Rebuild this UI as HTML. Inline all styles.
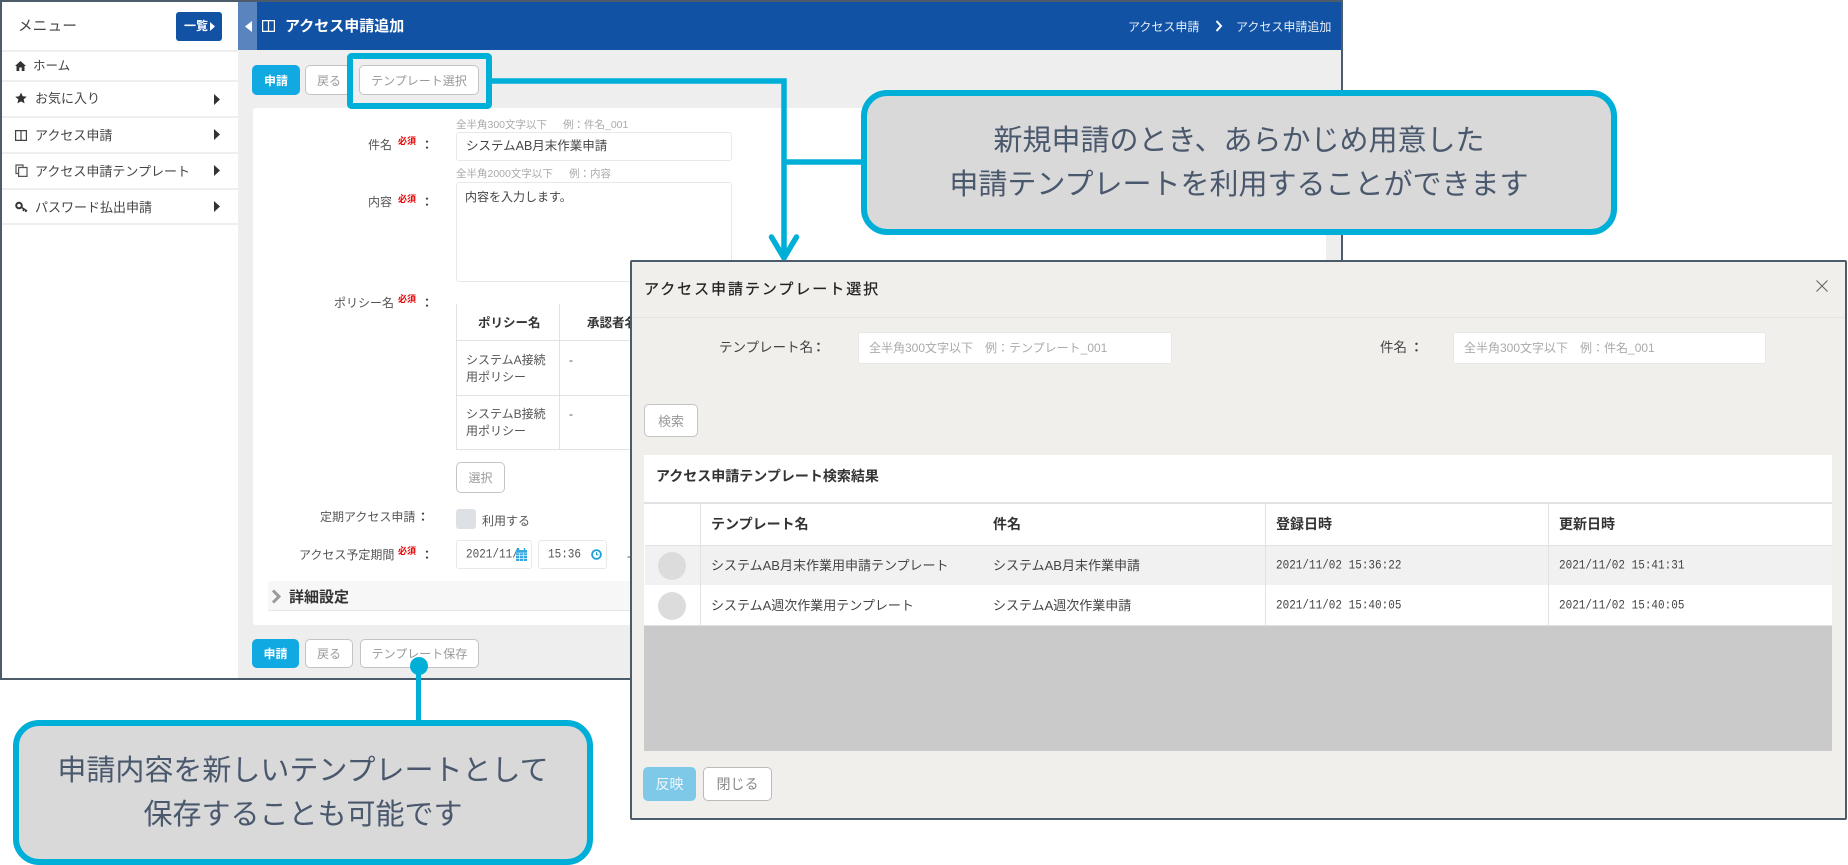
<!DOCTYPE html>
<html lang="ja"><head><meta charset="utf-8"><title>アクセス申請追加</title>
<style>
*{box-sizing:border-box}
html,body{margin:0;padding:0;background:#fff;width:1848px;height:865px;overflow:hidden}
body{position:relative;font-family:"Liberation Sans","Noto Sans CJK JP",sans-serif;color:#444}
.a,.t{position:absolute}
.t{white-space:nowrap;line-height:20px;font-size:13px;margin-top:1px}
.btn{position:absolute;display:flex;align-items:center;justify-content:center;border-radius:5px;border:1.5px solid #c4c4c4;background:#fff;color:#999;font-size:12px;white-space:nowrap}
.pri{background:#10a9e2;border-color:#10a9e2;color:#fff;font-weight:bold}
.inp{position:absolute;background:#fff;border:1px solid #e8e8e8;border-radius:3px}
.sep{position:absolute;left:2px;width:236px;height:2px;background:#eeeeee}
.req{position:absolute;color:#e60000;font-size:9px;font-weight:bold;line-height:12px;white-space:nowrap}
.help{color:#aaa;font-size:10.5px;margin-top:0}
.lab{color:#555;font-size:12px}
.call{position:absolute;background:#d9d9d9;border:6px solid #00afd7;border-radius:26px}
.ct{position:absolute;font-size:29px;line-height:44px;color:#4a586d;white-space:nowrap;left:0;right:0;text-align:center}
.m{font-family:"Liberation Mono","Noto Sans CJK JP",monospace;font-size:11px;color:#444;transform:scaleY(1.2);transform-origin:0 50%}
.b{font-weight:bold;color:#333;font-size:14px}
</style></head><body>

<!-- background window -->
<div class="a" style="left:0;top:0;width:1343px;height:680px;background:#eee;border:2px solid #4d5c6b;overflow:hidden"></div>
<div class="a" style="left:2px;top:2px;width:236px;height:676px;background:#fff"></div>
<div class="a" style="left:238px;top:2px;width:19px;height:48px;background:#5a84be"></div>
<div class="a" style="left:257px;top:2px;width:1084px;height:48px;background:#1152a5"></div>

<!-- sidebar -->
<div class="t" style="left:18px;top:16px;font-size:14.5px;color:#444;letter-spacing:.3px">メニュー</div>
<div class="a" style="left:176px;top:12px;width:46px;height:29px;background:#1152a5;border-radius:3px"></div>
<div class="t" style="left:184px;top:15px;color:#fff;font-size:12px;font-weight:bold">一覧</div>
<svg class="a" style="left:210px;top:22px" width="5" height="9"><path d="M0 0L5 4.500L0 9Z" fill="#fff"/></svg>
<div class="sep" style="top:50px"></div><div class="sep" style="top:80px"></div><div class="sep" style="top:116px"></div><div class="sep" style="top:152px"></div><div class="sep" style="top:188px"></div><div class="sep" style="top:223px"></div>
<svg class="a" style="left:15px;top:61px" width="11" height="10" viewBox="0 0 11 10"><path d="M5.500 0L11 5H9.500V10H6.700V6.500H4.300V10H1.500V5H0Z" fill="#333"/></svg>
<div class="t" style="left:33px;top:55px;font-size:12.5px">ホーム</div>
<svg class="a" style="left:15px;top:92px" width="12" height="12" viewBox="0 0 24 24"><path d="M12 1l3.400 7.400 8 .9-6 5.400 1.700 8L12 18.700 4.900 22.800l1.700-8-6-5.400 8-.9z" fill="#333"/></svg>
<div class="t" style="left:35px;top:88px">お気に入り</div>
<svg class="a" style="left:15px;top:130px" width="12" height="11" viewBox="0 0 12 11"><path d="M.6.6H11.400V10.400H.6ZM6 .6V10.400" fill="none" stroke="#444" stroke-width="1.200"/></svg>
<div class="t" style="left:35px;top:125px">アクセス申請</div>
<svg class="a" style="left:15px;top:164px" width="13" height="13" viewBox="0 0 13 13"><path d="M3.500 1H1V9.500H3M3.600 3.500H12V12.400H3.600Z M3 1H8V3" fill="none" stroke="#555" stroke-width="1.200"/></svg>
<div class="t" style="left:35px;top:161px">アクセス申請テンプレート</div>
<svg class="a" style="left:15px;top:201px" width="13" height="12" viewBox="0 0 13 12"><circle cx="4" cy="4.500" r="2.800" fill="none" stroke="#333" stroke-width="2"/><path d="M6 6L12 10M9 8L8 10M11 9.500L10.500 11" stroke="#333" stroke-width="1.600" fill="none"/></svg>
<div class="t" style="left:35px;top:197px">パスワード払出申請</div>
<svg class="a" style="left:214px;top:94px" width="6" height="180"><path d="M0 0L6 5.500L0 11ZM0 35L6 40.500L0 46ZM0 71L6 76.500L0 82ZM0 107L6 112.500L0 118Z" fill="#333"/></svg>

<!-- top bar -->
<svg class="a" style="left:245px;top:21px" width="7" height="11"><path d="M7 0V11L0 5.500Z" fill="#fff"/></svg>
<svg class="a" style="left:262px;top:20px" width="13" height="12" viewBox="0 0 13 12"><path d="M.6.6H12.400V11.400H.6ZM6.500 .6V11.400" fill="none" stroke="#fff" stroke-width="1.200"/></svg>
<div class="t" style="left:285px;top:16px;color:#fff;font-size:15px;font-weight:bold">アクセス申請追加</div>
<div class="t" style="left:1128px;top:16px;color:#e6edf6;font-size:12px">アクセス申請</div>
<svg class="a" style="left:1215px;top:20px" width="8" height="12"><path d="M1.500 1L6 6L1.500 11" fill="none" stroke="#fff" stroke-width="2"/></svg>
<div class="t" style="left:1236px;top:16px;color:#e6edf6;font-size:12px">アクセス申請追加</div>

<!-- top buttons -->
<div class="btn pri" style="left:252px;top:65px;width:48px;height:30px">申請</div>
<div class="btn" style="left:305px;top:65px;width:48px;height:30px">戻る</div>
<div class="btn" style="left:359px;top:65px;width:120px;height:30px">テンプレート選択</div>

<!-- form panel -->
<div class="a" style="left:253px;top:108px;width:1073px;height:517px;background:#fff;border-radius:3px"></div>
<div class="t help" style="left:456px;top:115px">全半角300文字以下</div><div class="t help" style="left:563px;top:115px">例：件名_001</div>
<div class="t lab" style="left:368px;top:134px">件名</div><div class="req" style="left:398px;top:135px">必須</div><div class="t" style="left:421px;top:134px;font-weight:bold;font-size:12px">：</div>
<div class="inp" style="left:456px;top:132px;width:276px;height:29px"></div>
<div class="t" style="left:466px;top:135px;font-size:12.500px;color:#444">システムAB月末作業申請</div>
<div class="t help" style="left:456px;top:164px">全半角2000文字以下</div><div class="t help" style="left:569px;top:164px">例：内容</div>
<div class="t lab" style="left:368px;top:191px">内容</div><div class="req" style="left:398px;top:193px">必須</div><div class="t" style="left:421px;top:191px;font-weight:bold;font-size:12px">：</div>
<div class="inp" style="left:456px;top:182px;width:276px;height:100px"></div>
<div class="t" style="left:465px;top:186px;font-size:12px;color:#444">内容を入力します。</div>
<div class="t lab" style="left:334px;top:292px">ポリシー名</div><div class="req" style="left:398px;top:293px">必須</div><div class="t" style="left:421px;top:292px;font-weight:bold;font-size:12px">：</div>

<!-- policy table -->
<div class="a" style="left:456px;top:304px;width:190px;height:146px;border-left:1px solid #e2e2e2;border-bottom:1px solid #e2e2e2"></div>
<div class="a" style="left:559px;top:304px;width:1px;height:146px;background:#e2e2e2"></div>
<div class="a" style="left:456px;top:340px;width:190px;height:1px;background:#e2e2e2"></div>
<div class="a" style="left:456px;top:395px;width:190px;height:1px;background:#e2e2e2"></div>
<div class="t" style="left:478px;top:312px;font-weight:bold;font-size:12.500px;color:#333">ポリシー名</div>
<div class="t" style="left:587px;top:312px;font-weight:bold;font-size:12.500px;color:#333">承認者名</div>
<div class="t lab" style="left:466px;top:349px">システムA接続</div><div class="t lab" style="left:466px;top:366px">用ポリシー</div>
<div class="t lab" style="left:466px;top:403px">システムB接続</div><div class="t lab" style="left:466px;top:420px">用ポリシー</div>
<div class="t lab" style="left:569px;top:349px">-</div><div class="t lab" style="left:569px;top:403px">-</div>

<div class="btn" style="left:456px;top:462px;width:49px;height:31px">選択</div>
<div class="t lab" style="left:320px;top:506px">定期アクセス申請</div><div class="t" style="left:417px;top:506px;font-weight:bold;font-size:12px">：</div>
<div class="a" style="left:456px;top:509px;width:20px;height:20px;background:#dde1e6;border-radius:3px"></div>
<div class="t lab" style="left:482px;top:510px">利用する</div>
<div class="t lab" style="left:299px;top:544px">アクセス予定期間</div><div class="req" style="left:398px;top:545px">必須</div><div class="t" style="left:421px;top:544px;font-weight:bold;font-size:12px">：</div>
<div class="inp" style="left:456px;top:540px;width:76px;height:29px"></div>
<div class="t m" style="left:466px;top:544px;color:#555">2021/11/</div>
<svg class="a" style="left:516px;top:548px" width="11" height="13" viewBox="0 0 11 13"><path d="M0 2H11V13H0Z" fill="#36a9e1"/><path d="M2.500 0V3M8.500 0V3" stroke="#36a9e1" stroke-width="1.500"/><path d="M0 5H11M0 7.700H11M0 10.300H11M3.600 5V13M7.300 5V13" stroke="#fff" stroke-width=".6"/></svg>
<div class="inp" style="left:538px;top:540px;width:69px;height:29px"></div>
<div class="t m" style="left:548px;top:544px;color:#555">15:36</div>
<svg class="a" style="left:591px;top:549px" width="11" height="11" viewBox="0 0 11 11"><circle cx="5.500" cy="5.500" r="4.400" fill="none" stroke="#1e9fd8" stroke-width="1.800"/><path d="M5.500 3V5.700H7.500" fill="none" stroke="#1e9fd8"/></svg>
<div class="t lab" style="left:627px;top:545px">-</div>

<div class="a" style="left:268px;top:581px;width:1040px;height:30px;background:#f7f7f7;border-bottom:1px solid #e6e6e6;border-radius:2px"></div>
<svg class="a" style="left:271px;top:589px" width="11" height="15"><path d="M2 1.500L8 7.500L2 13.500" fill="none" stroke="#999" stroke-width="3"/></svg>
<div class="t" style="left:289px;top:587px;font-size:15px;font-weight:bold;color:#333">詳細設定</div>

<!-- bottom buttons -->
<div class="btn pri" style="left:252px;top:639px;width:47px;height:29px">申請</div>
<div class="btn" style="left:305px;top:639px;width:48px;height:29px">戻る</div>
<div class="btn" style="left:360px;top:639px;width:119px;height:29px">テンプレート保存</div>

<!-- connectors -->
<svg class="a" style="left:0;top:0" width="1848" height="865">
<rect x="350" y="56" width="139" height="50" rx="1.500" fill="none" stroke="#00afd7" stroke-width="6"/>
<path d="M489 81H784V256M784 162H861" fill="none" stroke="#00afd7" stroke-width="5.500"/>
<path d="M771.500 237L784 258L796.500 237" fill="none" stroke="#00afd7" stroke-width="5.500" stroke-linecap="round"/>
<circle cx="419" cy="666" r="9" fill="#00afd7"/>
<path d="M418.500 666V722" stroke="#00afd7" stroke-width="5"/>
</svg>

<!-- callouts -->
<div class="call" style="left:861px;top:90px;width:756px;height:145px">
  <div class="ct" style="top:23px">新規申請のとき、あらかじめ用意した</div>
  <div class="ct" style="top:67px">申請テンプレートを利用することができます</div>
</div>
<div class="call" style="left:13px;top:720px;width:580px;height:145px">
  <div class="ct" style="top:23px">申請内容を新しいテンプレートとして</div>
  <div class="ct" style="top:67px">保存することも可能です</div>
</div>

<!-- modal -->
<div class="a" style="left:630px;top:260px;width:1217px;height:560px;background:#f0efeb;border:2px solid #4d5c6b;border-radius:2px"></div>
<div class="a" style="left:632px;top:317px;width:1213px;height:1px;background:#e4e3df"></div>
<div class="t" style="left:644px;top:278px;margin-top:2px;font-size:15px;letter-spacing:1.950px;color:#222;-webkit-text-stroke:.25px #222">アクセス申請テンプレート選択</div>
<svg class="a" style="left:1816px;top:280px" width="12" height="12"><path d="M.5.5L11.500 11.500M11.500 .5L.5 11.500" stroke="#666" stroke-width="1.100"/></svg>
<div class="t" style="left:719px;top:337px;font-size:13.500px;color:#444">テンプレート名</div><div class="t" style="left:812px;top:337px;font-weight:bold;font-size:13px">：</div>
<div class="inp" style="left:858px;top:332px;width:314px;height:32px"></div>
<div class="t" style="left:869px;top:337px;font-size:12px;color:#aaa">全半角300文字以下　例：テンプレート_001</div>
<div class="t" style="left:1380px;top:337px;font-size:13.500px;color:#444">件名</div><div class="t" style="left:1410px;top:337px;font-weight:bold;font-size:13px">：</div>
<div class="inp" style="left:1453px;top:332px;width:313px;height:32px"></div>
<div class="t" style="left:1464px;top:337px;font-size:12px;color:#aaa">全半角300文字以下　例：件名_001</div>
<div class="btn" style="left:644px;top:404px;width:54px;height:33px;font-size:13px">検索</div>

<div class="a" style="left:644px;top:455px;width:1188px;height:296px;background:#cacaca"></div>
<div class="a" style="left:644px;top:455px;width:1188px;height:171px;background:#fff;border-bottom:1px solid #e0e0e0"></div>
<div class="a" style="left:644px;top:502px;width:1188px;height:2px;background:#e2e2e2"></div>
<div class="a" style="left:645px;top:545px;width:1187px;height:1px;background:#e2e2e2"></div>
<div class="a" style="left:645px;top:546px;width:1187px;height:39px;background:#f1f1f1"></div>
<div class="a" style="left:700px;top:504px;width:1px;height:122px;background:#e2e2e2"></div>
<div class="a" style="left:1265px;top:504px;width:1px;height:122px;background:#e2e2e2"></div>
<div class="a" style="left:1548px;top:504px;width:1px;height:122px;background:#e2e2e2"></div>
<div class="t b" style="left:656px;top:465px">アクセス申請テンプレート検索結果</div>
<div class="t b" style="left:711px;top:513px">テンプレート名</div>
<div class="t b" style="left:993px;top:513px">件名</div>
<div class="t b" style="left:1276px;top:513px">登録日時</div>
<div class="t b" style="left:1559px;top:513px">更新日時</div>
<div class="a" style="left:658px;top:552px;width:28px;height:28px;border-radius:50%;background:#dcdcdc"></div>
<div class="a" style="left:658px;top:592px;width:28px;height:28px;border-radius:50%;background:#dcdcdc"></div>
<div class="t" style="left:711px;top:555px">システムAB月末作業用申請テンプレート</div>
<div class="t" style="left:993px;top:555px">システムAB月末作業申請</div>
<div class="t m" style="left:1276px;top:555px">2021/11/02 15:36:22</div>
<div class="t m" style="left:1559px;top:555px">2021/11/02 15:41:31</div>
<div class="t" style="left:711px;top:595px">システムA週次作業用テンプレート</div>
<div class="t" style="left:993px;top:595px">システムA週次作業申請</div>
<div class="t m" style="left:1276px;top:595px">2021/11/02 15:40:05</div>
<div class="t m" style="left:1559px;top:595px">2021/11/02 15:40:05</div>

<div class="btn" style="left:643px;top:767px;width:53px;height:34px;background:#7ec8e8;border-color:#7ec8e8;color:#eef8fc;font-size:14px">反映</div>
<div class="btn" style="left:703px;top:767px;width:69px;height:34px;font-size:14px;color:#888;border-color:#bbb">閉じる</div>
</body></html>
